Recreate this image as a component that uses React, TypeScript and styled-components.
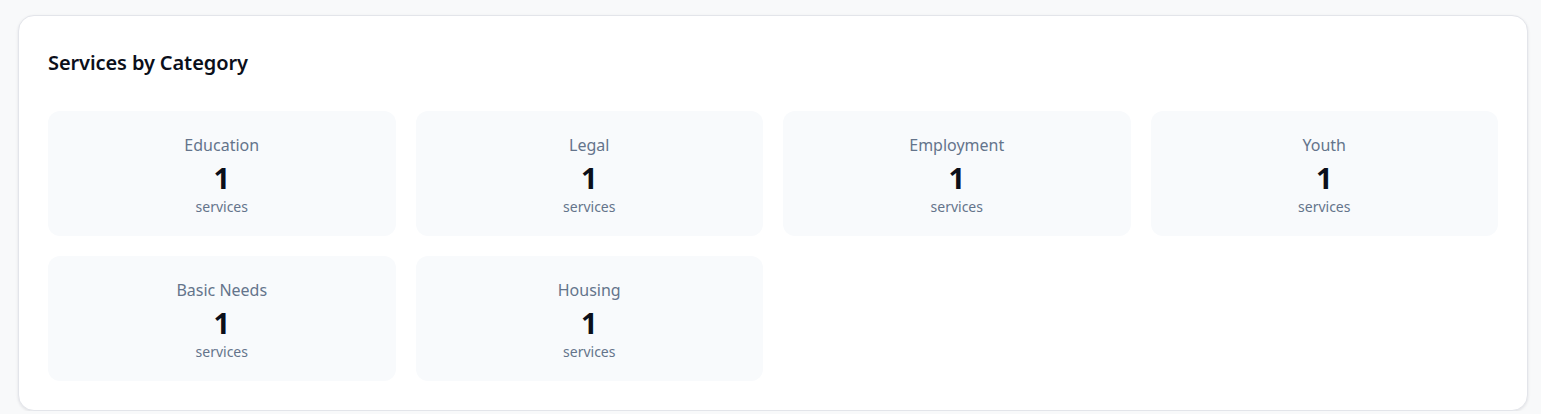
import React from "react";
import styled, { createGlobalStyle } from "styled-components";

const Global = createGlobalStyle`
  html, body { margin: 0; padding: 0; background: #f8f9fa; }
  body { font-family: "Noto Sans", "Open Sans", sans-serif; }
  * { box-sizing: border-box; }
`;

const Page = styled.div`
  padding: 15px 13px 0 18px;
`;

const Card = styled.section`
  background: #ffffff;
  border: 1px solid #e3e5ea;
  border-radius: 16px;
  box-shadow: 0 1px 3px rgba(15, 23, 42, 0.1);
  padding: 29px;
`;

const Title = styled.h2`
  margin: 5px 0 35px 0;
  font-size: 20px;
  line-height: 26px;
  font-weight: 600;
  color: #0b0f1a;
  letter-spacing: -0.1px;
`;

const Grid = styled.div`
  display: grid;
  grid-template-columns: repeat(4, 1fr);
  gap: 20px;
`;

const Tile = styled.div`
  background: #f8fafc;
  border-radius: 12px;
  height: 125px;
  padding: 22px 16px 0;
  display: flex;
  flex-direction: column;
  align-items: center;
`;

const Label = styled.div`
  font-size: 16px;
  line-height: 24px;
  margin-bottom: 2px;
  color: #64748b;
`;

const Count = styled.div`
  font-size: 29px;
  line-height: 38px;
  font-weight: 700;
  color: #0b0f1a;
`;

const Unit = styled.div`
  font-size: 14px;
  line-height: 20px;
  color: #64748b;
`;

const categories = ["Education", "Legal", "Employment", "Youth", "Basic Needs", "Housing"];

export default function App() {
  return (
    <>
      <Global />
      <Page>
        <Card>
          <Title>Services by Category</Title>
          <Grid>
            {categories.map((c) => (
              <Tile key={c}>
                <Label>{c}</Label>
                <Count>1</Count>
                <Unit>services</Unit>
              </Tile>
            ))}
          </Grid>
        </Card>
      </Page>
    </>
  );
}
